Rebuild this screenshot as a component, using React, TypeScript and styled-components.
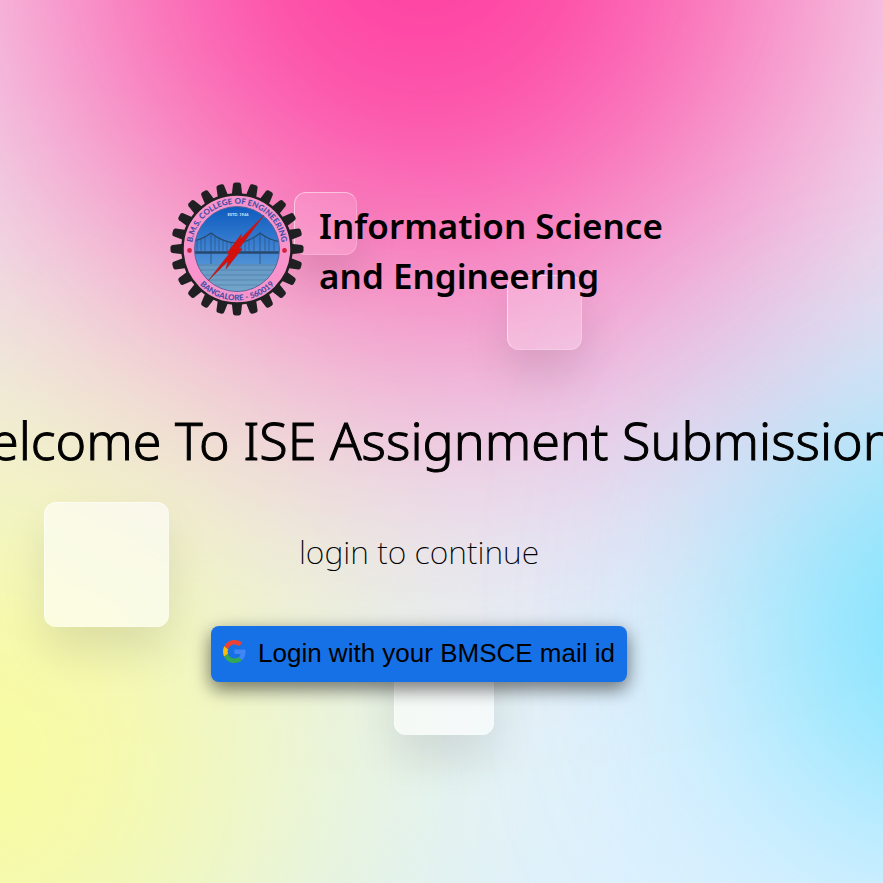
import React from "react";
import styled, { createGlobalStyle } from "styled-components";

const GlobalStyle = createGlobalStyle`
  * { box-sizing: border-box; }
  body { margin: 0; font-family: "Noto Sans", "Open Sans", sans-serif; color: #000; }
`;

const Page = styled.main`
  position: relative;
  display: flex;
  flex-direction: column;
  align-items: center;
  min-height: 100vh;
  padding: 179px 45px 48px 0;
  overflow: hidden;
  background: linear-gradient(to bottom, #f1f4f9, #dff1ff);
`;

const Glow = styled.div<{ $size: number; $blur: number; $color: string; $x: string; $y: string }>`
  position: absolute;
  left: ${(p) => p.$x};
  top: ${(p) => p.$y};
  width: ${(p) => p.$size}px;
  height: ${(p) => p.$size}px;
  border-radius: 50%;
  background: ${(p) => p.$color};
  filter: blur(${(p) => p.$blur}px);
  transform: translate(-50%, -50%);
`;

const GlassTile = styled.div<{ $size: number; $x: string; $y: string; $alpha: number }>`
  position: absolute;
  left: ${(p) => p.$x};
  top: ${(p) => p.$y};
  width: ${(p) => p.$size}px;
  height: ${(p) => p.$size}px;
  border: 1px solid rgba(255, 255, 255, 0.5);
  border-right-color: rgba(255, 255, 255, 0.2);
  border-bottom-color: rgba(255, 255, 255, 0.2);
  border-radius: 12px;
  background: rgba(255, 255, 255, ${(p) => p.$alpha});
  box-shadow: 0 25px 45px rgba(0, 0, 0, 0.1);
`;

const Brand = styled.header`
  position: relative;
  display: flex;
  align-items: center;
  gap: 12px;
  margin-right: 8px;
`;

const SealArt = styled.svg`
  flex: none;
  width: 140px;
  height: 140px;
`;

const Department = styled.p`
  margin: 0;
  padding-top: 4px;
  font-size: 35px;
  font-weight: 600;
  line-height: 50px;
  white-space: nowrap;
`;

const Title = styled.h1`
  position: relative;
  margin: 82px 0 0;
  font-size: 52px;
  font-weight: 300;
  line-height: 78px;
  white-space: nowrap;
  -webkit-text-stroke: 1px #000;
`;

const Hint = styled.p`
  position: relative;
  margin: 49px 0 0;
  font-size: 32px;
  font-weight: 200;
  line-height: 48px;
`;

const LoginButton = styled.button`
  position: relative;
  display: flex;
  align-items: center;
  gap: 12px;
  height: 56px;
  margin-top: 50px;
  padding: 0 12px 2px;
  border: 0;
  border-radius: 8px;
  background: #1771e6;
  box-shadow: 0 8px 16px rgba(0, 0, 0, 0.2), 0 6px 20px rgba(0, 0, 0, 0.4);
  color: #000;
  font-family: "Liberation Sans", Arial, sans-serif;
  font-size: 26px;
  white-space: nowrap;
  cursor: pointer;
`;

const GoogleMark = styled.svg`
  width: 23px;
  height: 23px;
  margin-bottom: 4px;
`;

const TEETH = Array.from({ length: 24 }, (_, i) => i * 15);
const WATER = [86, 91, 96, 101, 106];

function Seal() {
  return (
    <SealArt viewBox="0 0 140 140" role="img" aria-label="B.M.S. College of Engineering seal">
      <defs>
        <linearGradient id="sky" x1="0" y1="0" x2="0" y2="1">
          <stop offset="0" stopColor="#0c5bbd" />
          <stop offset="0.5" stopColor="#3f83d3" />
          <stop offset="1" stopColor="#6eabd9" />
        </linearGradient>
        <clipPath id="scene"><circle cx="70" cy="70" r="42" /></clipPath>
        <path id="upperArc" d="M24.8 70a45.2 45.2 0 0 1 90.4 0" />
        <path id="lowerArc" d="M18.5 70a51.5 51.5 0 0 0 103 0" />
      </defs>
      <g fill="#202022">
        {TEETH.map((angle) => (
          <path
            key={angle}
            d="M64.5 18 66 5.5Q66.3 3.5 68.3 3.5H71.7Q73.7 3.5 74 5.5L75.5 18Z"
            transform={`rotate(${angle} 70 70)`}
          />
        ))}
      </g>
      <circle cx="70" cy="70" r="54.5" fill="#f894cb" stroke="#202022" strokeWidth="2.5" />
      <circle cx="70" cy="70" r="42.5" fill="url(#sky)" stroke="#5a629c" strokeWidth="1" />
      <g clipPath="url(#scene)">
        <path d="M26 85h88v30H26z" fill="#789fb8" opacity=".5" />
        <g stroke="#244a76" strokeWidth=".6" opacity=".45">
          {WATER.map((y) => <path key={y} d={`M26 ${y}h88`} />)}
        </g>
        <g fill="none" stroke="#28496f">
          <path d="M26 62q10-2 18-8q11 9 25 10q14-1 24-10q9 7 21 9" strokeWidth="1.1" />
          <path d="M44 54v31M93 54v31" strokeWidth="1.2" opacity=".6" />
          <path d="M30 62v10M34 60v12M38 58v14M48 57v15M52 60v12M56 62v10M60 63v9M64 64v8M74 64v8M78 63v9M82 61v11M87 58v14M98 57v15M102 60v12M107 62v10" strokeWidth=".6" />
          <path d="M26 73.5h88" strokeWidth="2.4" />
        </g>
      </g>
      <path d="M97 36 73.5 60 74.5 55 60 74 62 75 41 102 61 82 59 90 75 70 72.5 69Z" fill="#d3100c" stroke="#9c2b35" strokeWidth=".6" />
      <circle cx="22.5" cy="71.5" r="2.4" fill="#cf2441" />
      <circle cx="117.5" cy="71.5" r="2.4" fill="#cf2441" />
      <g fill="#474da6" fontFamily="Lato, sans-serif" fontSize="8" fontWeight="900" textAnchor="middle">
        <text><textPath href="#upperArc" startOffset="50%">B.M.S. COLLEGE OF ENGINEERING</textPath></text>
        <text><textPath href="#lowerArc" startOffset="50%">BANGALORE - 560019</textPath></text>
      </g>
      <text x="71" y="37" fill="#dceaff" fontFamily="Lato, sans-serif" fontSize="4" fontWeight="700" textAnchor="middle">ESTD. 1946</text>
    </SealArt>
  );
}

function GoogleLogo() {
  return (
    <GoogleMark viewBox="0 0 48 48" aria-hidden="true">
      <path fill="#EA4335" d="M24 9.5c3.54 0 6.71 1.22 9.21 3.6l6.85-6.85C35.9 2.38 30.47 0 24 0 14.62 0 6.51 5.38 2.56 13.22l7.98 6.19C12.43 13.72 17.74 9.5 24 9.5z" />
      <path fill="#4285F4" d="M46.98 24.55c0-1.57-.15-3.09-.38-4.55H24v9.02h12.94c-.58 2.96-2.26 5.48-4.78 7.18l7.73 6c4.51-4.18 7.09-10.36 7.09-17.65z" />
      <path fill="#FBBC05" d="M10.53 28.59c-.48-1.45-.76-2.99-.76-4.59s.27-3.14.76-4.59l-7.98-6.19C.92 16.46 0 20.12 0 24s.92 7.54 2.56 10.78l7.97-6.19z" />
      <path fill="#34A853" d="M24 48c6.48 0 11.93-2.13 15.89-5.81l-7.73-6c-2.15 1.45-4.92 2.3-8.16 2.3-6.26 0-11.57-4.22-13.47-9.91l-7.98 6.19C6.51 42.62 14.62 48 24 48z" />
    </GoogleMark>
  );
}

export default function App() {
  return (
    <>
      <GlobalStyle />
      <Page>
        <Glow $size={800} $blur={190} $color="#ff359b" $x="48%" $y="-60px" />
        <Glow $size={620} $blur={190} $color="#fffd87" $x="-3%" $y="86%" />
        <Glow $size={300} $blur={150} $color="#00d2ff" $x="109%" $y="70%" />
        <GlassTile $size={63} $x="calc(50% - 148px)" $y="192px" $alpha={0.13} />
        <GlassTile $size={75} $x="calc(50% + 65px)" $y="275px" $alpha={0.2} />
        <GlassTile $size={125} $x="5%" $y="502px" $alpha={0.6} />
        <GlassTile $size={100} $x="calc(50% - 48px)" $y="635px" $alpha={0.6} />
        <Brand>
          <Seal />
          <Department>
            Information Science
            <br />
            and Engineering
          </Department>
        </Brand>
        <Title>Welcome To ISE Assignment Submission</Title>
        <Hint>login to continue</Hint>
        <LoginButton type="button">
          <GoogleLogo />
          Login with your BMSCE mail id
        </LoginButton>
      </Page>
    </>
  );
}
